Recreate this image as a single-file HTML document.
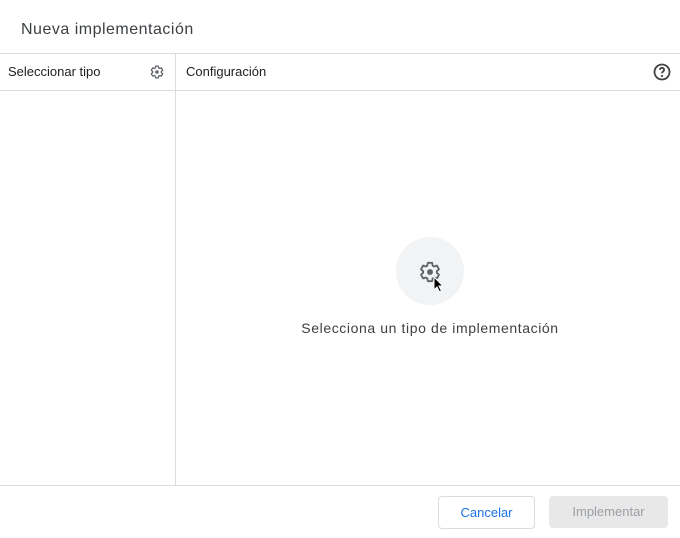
<!DOCTYPE html>
<html><head><style>
body{margin:0;width:680px;height:538px;background:#fff;font-family:"Liberation Sans",Arial,sans-serif;position:relative;overflow:hidden;color:#3c4043}
.a{position:absolute}
</style></head><body>
<div class="a" style="left:21px;top:21px;font-size:16px;letter-spacing:.5px;color:#3c4043">Nueva implementación</div>
<div class="a" style="left:0;top:53px;width:680px;height:1px;background:#dadce0"></div>
<div class="a" style="left:0;top:90px;width:680px;height:1px;background:#dadce0"></div>
<div class="a" style="left:175px;top:54px;width:1px;height:431px;background:#dadce0"></div>
<div class="a" style="left:0;top:485px;width:680px;height:1px;background:#dadce0"></div>
<div class="a" style="left:8px;top:64px;font-size:13px;color:#202124">Seleccionar tipo</div>
<svg class="a" style="left:150px;top:65px" width="14" height="14" viewBox="0 0 24 24"><path fill="none" stroke="#5f6368" stroke-width="2.2" stroke-linejoin="round" d="M19.43 12.98c.04-.32.07-.64.07-.98s-.03-.66-.07-.98l2.11-1.65c.19-.15.24-.42.12-.64l-2-3.46c-.12-.22-.39-.3-.61-.22l-2.49 1c-.52-.4-1.08-.73-1.69-.98l-.38-2.65A.49.49 0 0014 2h-4c-.25 0-.46.18-.49.42l-.38 2.65c-.61.25-1.17.59-1.69.98l-2.49-1c-.23-.09-.49 0-.61.22l-2 3.46c-.13.22-.07.49.12.64l2.11 1.65c-.04.32-.07.65-.07.98s.03.66.07.98l-2.11 1.65c-.19.15-.24.42-.12.64l2 3.46c.12.22.39.3.61.22l2.49-1c.52.4 1.08.73 1.69.98l.38 2.65c.03.24.24.42.49.42h4c.25 0 .46-.18.49-.42l.38-2.65c.61-.25 1.17-.59 1.69-.98l2.49 1c.23.09.49 0 .61-.22l2-3.46c.12-.22.07-.49-.12-.64l-2.11-1.65z"/><circle cx="12" cy="12" r="3" fill="#5f6368"/></svg>
<div class="a" style="left:186px;top:64px;font-size:13px;color:#202124">Configuración</div>
<svg class="a" style="left:652px;top:62px" width="20" height="20" viewBox="0 0 24 24"><circle cx="12" cy="12" r="9" fill="none" stroke="#444" stroke-width="2.2"/><path d="M9.5 9.5a2.5 2.5 0 115 0c0 1.8-2.5 2-2.5 4" fill="none" stroke="#444" stroke-width="2.2"/><circle cx="12" cy="16.8" r="1.3" fill="#444"/></svg>
<div class="a" style="left:396px;top:237px;width:68px;height:68px;border-radius:50%;background:#f1f3f4"></div>
<svg class="a" style="left:419px;top:261px" width="22" height="22" viewBox="0 0 24 24"><path fill="none" stroke="#5f6368" stroke-width="2" stroke-linejoin="round" d="M19.43 12.98c.04-.32.07-.64.07-.98s-.03-.66-.07-.98l2.11-1.65c.19-.15.24-.42.12-.64l-2-3.46c-.12-.22-.39-.3-.61-.22l-2.49 1c-.52-.4-1.08-.73-1.69-.98l-.38-2.65A.49.49 0 0014 2h-4c-.25 0-.46.18-.49.42l-.38 2.65c-.61.25-1.17.59-1.69.98l-2.49-1c-.23-.09-.49 0-.61.22l-2 3.46c-.13.22-.07.49.12.64l2.11 1.65c-.04.32-.07.65-.07.98s.03.66.07.98l-2.11 1.65c-.19.15-.24.42-.12.64l2 3.46c.12.22.39.3.61.22l2.49-1c.52.4 1.08.73 1.69.98l.38 2.65c.03.24.24.42.49.42h4c.25 0 .46-.18.49-.42l.38-2.65c.61-.25 1.17-.59 1.69-.98l2.49 1c.23.09.49 0 .61-.22l2-3.46c.12-.22.07-.49-.12-.64l-2.11-1.65z"/><circle cx="12" cy="12" r="3.2" fill="#5f6368"/></svg>
<svg class="a" style="left:433px;top:276px" width="12" height="18" viewBox="0 0 12 18"><path d="M1 1v13l3-3 2.5 5 2-1-2.5-5h4z" fill="#000" stroke="#fff" stroke-width="1"/></svg>
<div class="a" style="left:176px;top:320px;width:508px;text-align:center;font-size:14px;color:#3c4043;letter-spacing:.6px">Selecciona un tipo de implementación</div>
<div class="a" style="left:438px;top:496px;width:95px;height:31px;border:1px solid #dadce0;border-radius:4px;text-align:center;line-height:31px;font-size:13px;color:#1a73e8">Cancelar</div>
<div class="a" style="left:549px;top:496px;width:119px;height:32px;background:#e8e8e8;border-radius:4px;text-align:center;line-height:32px;font-size:13px;color:#9aa0a6">Implementar</div>
</body></html>
